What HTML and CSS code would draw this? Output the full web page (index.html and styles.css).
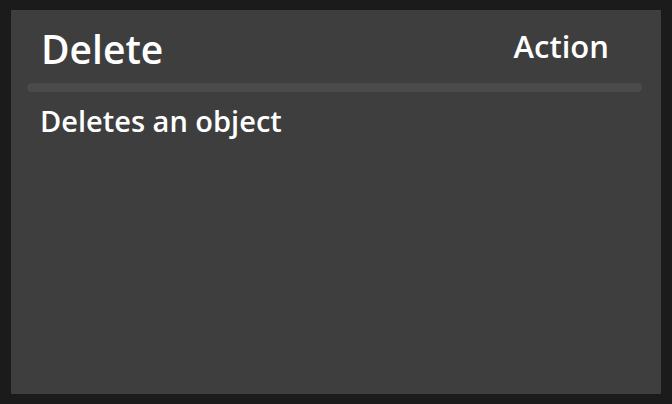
FILE: index.html
```html
<!DOCTYPE html>
<html>
<head>
<meta charset="utf-8">
<link rel="stylesheet" href="styles.css">
</head>
<body>
<div class="card">
  <div class="header">
    <h1 class="title">Delete</h1>
    <span class="kind">Action</span>
  </div>
  <div class="divider"></div>
  <p class="desc">Deletes an object</p>
</div>
</body>
</html>
```
FILE: styles.css
```css
html, body {
  margin: 0;
  padding: 0;
  height: 100%;
}
body {
  box-sizing: border-box;
  background: #1b1b1b;
  padding: 10px 11px;
  font-family: "Open Sans", "Noto Sans", sans-serif;
  color: #ffffff;
}
.card {
  box-sizing: border-box;
  height: 100%;
  background: #3e3e3e;
  padding: 0 19px 0 16px;
}
.header {
  display: flex;
  justify-content: space-between;
  align-items: flex-start;
  padding: 0 33px 0 14px;
  height: 73px;
}
.title {
  margin: 0;
  font-size: 39px;
  font-weight: 600;
  line-height: 77px;
}
.kind {
  font-size: 31px;
  font-weight: 600;
  line-height: 72px;
}
.divider {
  height: 9px;
  border-radius: 5px;
  background: #4b4b4b;
}
.desc {
  margin: 11px 0 0 13px;
  font-size: 29px;
  font-weight: 600;
  line-height: 36px;
}
```
